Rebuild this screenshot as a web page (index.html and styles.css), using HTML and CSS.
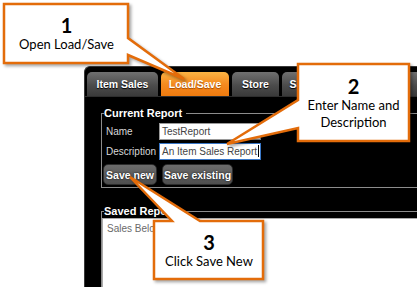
FILE: index.html
```html
<!DOCTYPE html>
<html lang="en">
<head>
	<meta charset="UTF-8">
	<title>Load/Save report</title>
	<link rel="stylesheet" href="styles.css">
</head>
<body>
	<div class="app">
		<div class="tabs">
			<div class="tab t-sales">Item Sales</div>
			<div class="tab t-load active">Load/Save</div>
			<div class="tab t-store">Store</div>
			<div class="tab t-trends">Sales Trends</div>
			<div class="tab t-map">Map</div>
		</div>
		<div class="content">
			<fieldset class="group current">
				<legend>Current Report</legend>
				<div class="row"><label>Name</label><div class="field">TestReport</div></div>
				<div class="row"><label>Description</label><div class="field focus">An Item Sales Report<span class="caret"></span></div></div>
				<div class="buttons">
					<button class="btn b-new">Save new</button>
					<button class="btn b-existing">Save existing</button>
				</div>
			</fieldset>
			<fieldset class="group saved">
				<legend>Saved Reports</legend>
				<div class="list">
					<div class="item">Sales Below Cost</div>
				</div>
			</fieldset>
		</div>
	</div>

	<svg class="shapes" width="417" height="287" viewBox="0 0 417 287">
		<path d="M4,4 H128 V38 L184,79 L128,55 V63 H4 Z"/>
		<path d="M298,64 H409 V141 H298 V128 L227,144 L298,100 Z"/>
		<path d="M154,221 H172 L130,177 L200,221 H263 V279 H154 Z"/>
	</svg>

	<div class="note n1"><b>1</b><span>Open Load/Save</span></div>
	<div class="note n2"><b>2</b><span>Enter Name and</span><span>Description</span></div>
	<div class="note n3"><b>3</b><span>Click Save New</span></div>
</body>
</html>
```

FILE: styles.css
```css
html,body{margin:0;padding:0;}
body{position:relative;width:417px;height:287px;overflow:hidden;background:#fff;font-family:"Liberation Sans",Arial,sans-serif;}

/* app window */
.app{margin:66px 0 0 84px;width:333px;height:220px;overflow:hidden;background:#000;border:1px solid #3a3a3a;border-right:0;border-bottom:0;border-radius:6px 0 0 0;}
.tabs{display:flex;gap:3px;padding:5px 0 0 2px;border-bottom:1px solid #2e2e2e;}
.tab{flex:none;height:24px;line-height:25px;text-align:center;color:#fff;font-weight:bold;font-size:10.5px;border-radius:5px 5px 0 0;background:linear-gradient(#707070,#4c4c4c 55%,#3a3a3a);text-shadow:0 1px 1px #000;white-space:nowrap;}
.tab.active{background:linear-gradient(#fbb444,#f58b20 50%,#ee7a0e);text-shadow:0 1px 1px #a04a00;}
.t-sales{width:71px;}
.t-load{width:68px;}
.t-store{width:47px;}
.t-trends{width:80px;}
.t-map{width:66px;}

.content{padding:9px 0 0 16px;}
.group{margin:0;border:1px solid #8c8c8c;border-right:0;padding:0 0 2px 2px;}
.group legend{padding:0 4px 0 0;color:#fff;font-weight:bold;font-size:11px;line-height:14px;}
.row{display:flex;align-items:center;height:17px;margin-top:3px;}
.row label{box-sizing:border-box;width:55px;padding-left:2px;color:#d8d8d8;font-size:10px;}
.field{box-sizing:border-box;width:102px;height:17px;padding:0 2px;border:1px solid #9a9a9a;background:#fff;color:#444;font-size:10px;line-height:15px;white-space:nowrap;}
.field.focus{border-color:#3a78c8;}
.caret{display:inline-block;width:1px;height:12px;margin-left:1px;background:#000;vertical-align:-2px;}

.buttons{display:flex;gap:5px;margin:4px 0 0 -1px;}
.btn{box-sizing:border-box;height:21px;padding:0;border:1px solid #2c2c2c;border-radius:5px;background:linear-gradient(#6c6c6c,#4e4e4e);color:#fff;font:bold 10.5px "Liberation Sans",Arial,sans-serif;text-shadow:0 0 2px #000;white-space:nowrap;}
.b-new{width:54px;}
.b-existing{width:71px;}

.saved{margin-top:16px;padding:0;}
.saved legend{margin-left:2px;}
.list{height:70px;border:1px solid #aaa;border-right:0;background:#fff;}
.item{padding:3px 4px;color:#6a6a6a;font-size:10px;line-height:14px;}

/* callouts */
.shapes{position:absolute;left:0;top:0;}
.shapes path{fill:#fff;stroke:#e36c0a;stroke-width:2.5;stroke-linejoin:miter;filter:drop-shadow(2px 2px 1.5px rgba(0,0,0,.35));}
.note{position:absolute;display:flex;flex-direction:column;align-items:center;color:#000;font-family:Lato,"Open Sans",sans-serif;}
.note b{font-size:20px;line-height:22px;}
.note span{font-size:13px;line-height:17px;}
.n1{left:4px;top:3px;width:125px;padding-top:11px;}
.n2{left:298px;top:63px;width:111px;padding-top:12px;}
.n3{left:154px;top:220px;width:110px;padding-top:11px;}
```
